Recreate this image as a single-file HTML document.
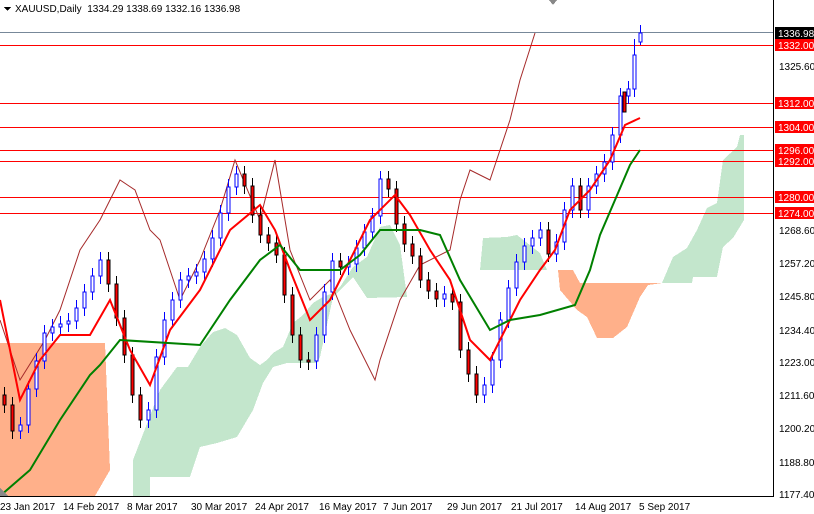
<!DOCTYPE html>
<html><head><meta charset="utf-8"><style>
html,body{margin:0;padding:0;background:#fff;width:814px;height:514px;overflow:hidden}
svg{display:block;font-family:"Liberation Sans",Tahoma,sans-serif}
</style></head><body>
<svg width="814" height="514" xmlns="http://www.w3.org/2000/svg" shape-rendering="crispEdges">
<polygon fill="#ffb08a" points="0,343 105,343 110,470 95,496 0,496"/>
<polygon fill="#c3e6cc" points="133,460 160,390 177,367 188,367 200,347 213,332 225,328 237,335 250,358 260,365 267,360 273,353 283,347 293,323 303,315 313,303 323,297 333,293 340,287 353,267 367,257 380,227 390,225 400,245 407,297 367,298 353,277 333,297 320,357 317,363 287,363 273,367 263,383 253,410 237,437 217,443 200,447 190,477 150,477 150,496 133,496"/>
<polygon fill="#c3e6cc" points="483,238 507,237 517,235 540,253 547,270 480,270"/>
<polygon fill="#ffb08a" points="558,270 573,270 580,283 662,283 648,285 640,297 627,327 613,338 597,338 587,317 577,310 560,290"/>
<polygon fill="#c3e6cc" points="662,283 673,257 687,248 697,230 707,208 717,203 723,160 737,147 740,135 744,135 744,220 733,238 723,247 717,277 693,277 692,283"/>
<g stroke="#ff0000" stroke-width="1" fill="none">
<line x1="0" y1="45.5" x2="773" y2="45.5"/>
<line x1="0" y1="103.5" x2="773" y2="103.5"/>
<line x1="0" y1="127.5" x2="773" y2="127.5"/>
<line x1="0" y1="150.5" x2="773" y2="150.5"/>
<line x1="0" y1="161.5" x2="773" y2="161.5"/>
<line x1="0" y1="197.5" x2="773" y2="197.5"/>
<line x1="0" y1="213.5" x2="773" y2="213.5"/>
</g>
<line x1="0" y1="32.5" x2="773" y2="32.5" stroke="#778899"/>
<g shape-rendering="auto">
<polyline fill="none" stroke="#a52a2a" stroke-width="1" points="0,320 20,380 45,340 60,310 80,250 100,220 120,180 135,190 150,230 160,240 180,300 200,260 220,210 235,160 260,220 275,160 290,250 310,300 330,280 350,330 360,350 375,380 380,360 400,300 420,265 450,250 460,200 470,170 490,180 510,120 520,80 535,33"/>
</g>
<path fill="none" stroke="#0000ff" stroke-width="1" d="M20.5 417V439M28.5 381V433M36.5 353V397M44.5 325V369M52.5 319V341M60.5 316V335M68.5 313V332M76.5 300V329M84.5 284V316M92.5 268V300M100.5 252V284M148.5 402V428M156.5 349V418M164.5 312V365M172.5 292V328M180.5 272V308M188.5 268V288M196.5 264V284M204.5 251V280M212.5 230V267M220.5 205V246M228.5 179V221M236.5 166V195M316.5 327V369M324.5 284V343M332.5 253V300M348.5 256V275M356.5 240V272M364.5 224V256M372.5 208V240M380.5 171V224M444.5 286V307M484.5 377V403M492.5 352V393M500.5 312V368M508.5 280V328M516.5 254V296M524.5 238V270M532.5 230V254M540.5 222V246M556.5 234V262M564.5 202V250M572.5 178V218M588.5 178V218M596.5 166V194M604.5 154V182M612.5 127V170M620.5 88V143M628.5 81V104M634.5 39V97M640.5 25V45"/>
<path fill="none" stroke="#000" stroke-width="1" d="M4.5 387V413M12.5 397V439M108.5 252V292M116.5 276V326M124.5 310V363M132.5 347V403M140.5 387V428M244.5 166V194M252.5 178V223M260.5 207V243M268.5 227V251M276.5 235V263M284.5 247V303M292.5 287V343M300.5 327V368M308.5 352V370M340.5 253V275M388.5 171V197M396.5 181V232M404.5 216V252M412.5 236V264M420.5 248V288M428.5 272V299M436.5 283V307M452.5 286V310M460.5 294V358M468.5 342V382M476.5 366V403M548.5 222V262M580.5 178V218"/>
<g fill="#fff" stroke="#0000ff" stroke-width="1">
<rect x="19" y="425" width="3" height="6"/><rect x="27" y="389" width="3" height="36"/><rect x="35" y="361" width="3" height="28"/><rect x="43" y="333" width="3" height="28"/><rect x="51" y="327" width="3" height="6"/><rect x="59" y="324" width="3" height="3"/><rect x="67" y="321" width="3" height="3"/><rect x="75" y="308" width="3" height="13"/><rect x="83" y="292" width="3" height="16"/><rect x="91" y="276" width="3" height="16"/><rect x="99" y="260" width="3" height="16"/>
<rect x="147" y="410" width="3" height="10"/><rect x="155" y="357" width="3" height="53"/><rect x="163" y="320" width="3" height="37"/><rect x="171" y="300" width="3" height="20"/><rect x="179" y="280" width="3" height="20"/><rect x="187" y="276" width="3" height="4"/><rect x="195" y="272" width="3" height="4"/><rect x="203" y="259" width="3" height="13"/><rect x="211" y="238" width="3" height="21"/><rect x="219" y="213" width="3" height="25"/><rect x="227" y="187" width="3" height="26"/><rect x="235" y="174" width="3" height="13"/>
<rect x="315" y="335" width="3" height="26"/><rect x="323" y="292" width="3" height="43"/><rect x="331" y="261" width="3" height="31"/><rect x="347" y="264" width="3" height="3"/><rect x="355" y="248" width="3" height="16"/><rect x="363" y="232" width="3" height="16"/><rect x="371" y="216" width="3" height="16"/><rect x="379" y="179" width="3" height="37"/>
<rect x="443" y="294" width="3" height="5"/><rect x="483" y="385" width="3" height="10"/><rect x="491" y="360" width="3" height="25"/><rect x="499" y="320" width="3" height="40"/><rect x="507" y="288" width="3" height="32"/><rect x="515" y="262" width="3" height="26"/><rect x="523" y="246" width="3" height="16"/><rect x="531" y="238" width="3" height="8"/><rect x="539" y="230" width="3" height="8"/><rect x="555" y="242" width="3" height="12"/><rect x="563" y="210" width="3" height="32"/><rect x="571" y="186" width="3" height="24"/><rect x="587" y="186" width="3" height="24"/><rect x="595" y="174" width="3" height="12"/><rect x="603" y="162" width="3" height="12"/><rect x="611" y="135" width="3" height="27"/><rect x="619" y="96" width="3" height="39"/><rect x="627" y="89" width="3" height="7"/><rect x="633" y="55" width="3" height="34"/><rect x="639" y="33" width="3" height="9"/>
</g>
<g fill="#ff0000" stroke="#000" stroke-width="1">
<rect x="3" y="395" width="3" height="10"/><rect x="11" y="405" width="3" height="26"/><rect x="107" y="260" width="3" height="24"/><rect x="115" y="284" width="3" height="34"/><rect x="123" y="318" width="3" height="37"/><rect x="131" y="355" width="3" height="40"/><rect x="139" y="395" width="3" height="25"/>
<rect x="243" y="174" width="3" height="12"/><rect x="251" y="186" width="3" height="29"/><rect x="259" y="215" width="3" height="20"/><rect x="267" y="235" width="3" height="8"/><rect x="275" y="243" width="3" height="12"/><rect x="283" y="255" width="3" height="40"/><rect x="291" y="295" width="3" height="40"/><rect x="299" y="335" width="3" height="25"/><rect x="307" y="360" width="3" height="2"/><rect x="339" y="261" width="3" height="6"/>
<rect x="387" y="179" width="3" height="10"/><rect x="395" y="189" width="3" height="35"/><rect x="403" y="224" width="3" height="20"/><rect x="411" y="244" width="3" height="12"/><rect x="419" y="256" width="3" height="24"/><rect x="427" y="280" width="3" height="11"/><rect x="435" y="291" width="3" height="8"/><rect x="451" y="294" width="3" height="8"/><rect x="459" y="302" width="3" height="48"/><rect x="467" y="350" width="3" height="24"/><rect x="475" y="374" width="3" height="21"/><rect x="547" y="230" width="3" height="24"/><rect x="579" y="186" width="3" height="24"/><rect x="623" y="92" width="3" height="20"/>
</g>
<g shape-rendering="auto">
<polyline fill="none" stroke="#ff0000" stroke-width="2" points="0,300 20,400 40,360 60,335 90,335 110,300 130,350 150,385 170,330 200,290 230,230 260,205 275,230 290,270 310,320 330,300 350,260 370,220 395,195 410,215 430,250 450,280 470,340 490,360 505,330 520,300 540,270 555,250 570,210 590,190 610,160 625,125 640,118"/>
<polyline fill="none" stroke="#008000" stroke-width="2" points="0,496 30,470 60,420 90,375 100,365 120,340 200,345 230,300 260,260 280,245 300,270 340,270 360,255 380,230 420,230 440,235 460,280 490,330 510,320 540,315 575,305 590,270 600,235 615,200 630,165 640,150"/>
</g>
<rect x="774" y="0" width="40" height="514" fill="#fff"/>
<rect x="773" y="0" width="1" height="497" fill="#000"/>
<rect x="0" y="496" width="774" height="1" fill="#000"/>
<g font-size="10" fill="#000" shape-rendering="auto">
<text x="779" y="70">1325.60</text><text x="779" y="234">1268.60</text><text x="779" y="267">1257.20</text>
<text x="779" y="300">1245.80</text><text x="779" y="334">1234.40</text><text x="779" y="366">1223.00</text>
<text x="779" y="399">1211.60</text><text x="779" y="432">1200.20</text><text x="779" y="466">1188.80</text>
<text x="779" y="498">1177.40</text>
</g>
<rect x="775" y="27" width="39" height="12" fill="#000"/><text x="778" y="37" font-size="10" fill="#fff">1336.98</text>
<g font-size="10" fill="#fff">
<rect x="775" y="39" width="39" height="12" fill="#ff0000"/><text x="778" y="49">1332.00</text>
<rect x="775" y="97" width="39" height="12" fill="#ff0000"/><text x="778" y="107">1312.00</text>
<rect x="775" y="121" width="39" height="12" fill="#ff0000"/><text x="778" y="131">1304.00</text>
<rect x="775" y="144" width="39" height="12" fill="#ff0000"/><text x="778" y="154">1296.00</text>
<rect x="775" y="155" width="39" height="12" fill="#ff0000"/><text x="778" y="165">1292.00</text>
<rect x="775" y="191" width="39" height="12" fill="#ff0000"/><text x="778" y="201">1280.00</text>
<rect x="775" y="207" width="39" height="12" fill="#ff0000"/><text x="778" y="217">1274.00</text>
</g>
<g font-size="10" fill="#000">
<text x="0" y="510">23 Jan 2017</text><text x="63" y="510">14 Feb 2017</text><text x="127" y="510">8 Mar 2017</text>
<text x="191" y="510">30 Mar 2017</text><text x="255" y="510">24 Apr 2017</text><text x="319" y="510">16 May 2017</text>
<text x="383" y="510">7 Jun 2017</text><text x="447" y="510">29 Jun 2017</text><text x="511" y="510">21 Jul 2017</text>
<text x="575" y="510">14 Aug 2017</text><text x="639" y="510">5 Sep 2017</text>
</g>
<rect x="0" y="0" width="240" height="16" fill="#fff"/>
<polygon points="4,7 11,7 7.5,11" fill="#000"/>
<text x="15" y="12" font-size="10" fill="#000" xml:space="preserve">XAUUSD,Daily  1334.29 1338.69 1332.16 1336.98</text>
<polygon points="549,0 557,0 553,5" fill="#888"/>
<polygon points="0,488 8,496 0,496" fill="#888"/>
</svg>
</body></html>
